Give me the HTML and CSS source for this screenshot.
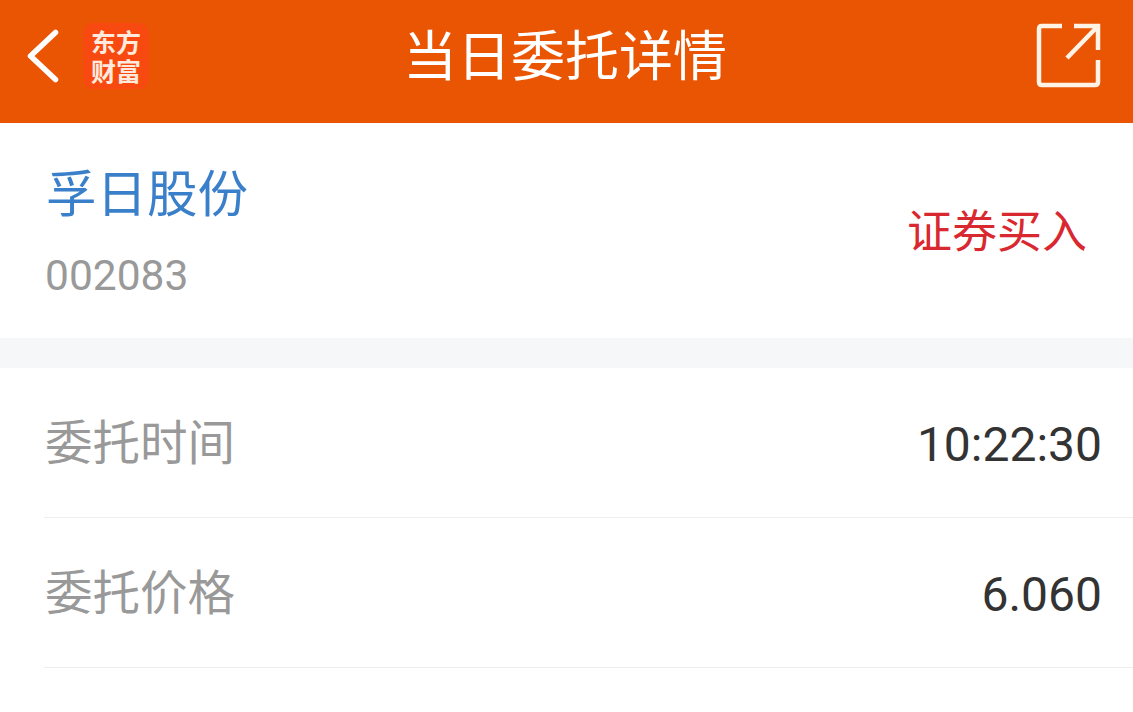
FILE: index.html
```html
<!DOCTYPE html>
<html>
<head>
<meta charset="utf-8">
<title>当日委托详情</title>
<link rel="stylesheet" href="styles.css">
</head>
<body>

<div class="header">
    <div class="header-left">
        <svg class="back" width="34" height="56" viewBox="0 0 34 56"><path d="M29.5 4.5 L4.5 28 L29.5 51.5" fill="none" stroke="#fff" stroke-width="5.5" stroke-linecap="round" stroke-linejoin="round"/></svg>
        <div class="logo"><span class="logo-text">东方财富</span></div>
    </div>
    <div class="title">当日委托详情</div>
    <svg class="share" width="66" height="66" viewBox="0 0 66 66"><path d="M26 3 H6 Q3 3 3 6 V59 Q3 62 6 62 H59 Q62 62 62 59 V37 M38 3 H62 V27 M62 3 L31 35" fill="none" stroke="#fff3e6" stroke-width="4.5"/></svg>
</div>

<div class="stock">
    <div>
        <div class="stock-name">孚日股份</div>
        <div class="stock-code">002083</div>
    </div>
    <div class="stock-type">证券买入</div>
</div>

<div class="gap"></div>

<div class="row">
    <span class="label">委托时间</span>
    <span class="value">10:22:30</span>
</div>
<div class="row">
    <span class="label">委托价格</span>
    <span class="value">6.060</span>
</div>

</body>
</html>
```

FILE: styles.css
```css
*{margin:0;padding:0;box-sizing:border-box;}
html,body{height:100%;overflow:hidden;}
body{background:#fff;font-family:"Roboto","Noto Sans CJK SC",sans-serif;}

.header{height:123px;background:#ea5504;display:flex;align-items:center;justify-content:space-between;padding:0 31px 11px 26px;position:relative;}
.header-left{display:flex;align-items:center;gap:23px;}
.back{display:block;}
.logo{width:66px;height:66px;background:#f84a10;border-radius:11px;display:flex;align-items:center;justify-content:center;color:#ffeadd;font-family:"Noto Sans CJK SC",sans-serif;font-size:25px;font-weight:700;line-height:29px;}
.logo-text{display:block;width:50px;text-align:center;}
.title{position:absolute;left:0;right:0;top:18px;padding-right:3px;text-align:center;color:#fff;font-size:54px;line-height:70px;font-family:"Noto Sans CJK SC",sans-serif;}
.share{display:block;}

.stock{height:215px;padding:0 46px 6px;display:flex;align-items:center;justify-content:space-between;}
.stock-name{color:#3a7fc9;font-size:50.5px;line-height:70px;font-family:"Noto Sans CJK SC",sans-serif;}
.stock-code{color:#999;font-size:42.5px;line-height:50px;margin:26px 0 0 -1px;}
.stock-type{color:#d9282f;font-size:45px;line-height:60px;margin-top:2px;font-family:"Noto Sans CJK SC",sans-serif;}

.gap{height:30px;background:#f5f7f9;}

.row{height:150px;margin-left:44px;padding-right:31px;border-bottom:1px solid #eee;display:flex;align-items:center;justify-content:space-between;}
.label{color:#999;font-size:47.5px;margin:0 0 6px 1px;font-family:"Noto Sans CJK SC",sans-serif;}
.value{color:#333;font-size:48px;margin-top:3px;}
```
